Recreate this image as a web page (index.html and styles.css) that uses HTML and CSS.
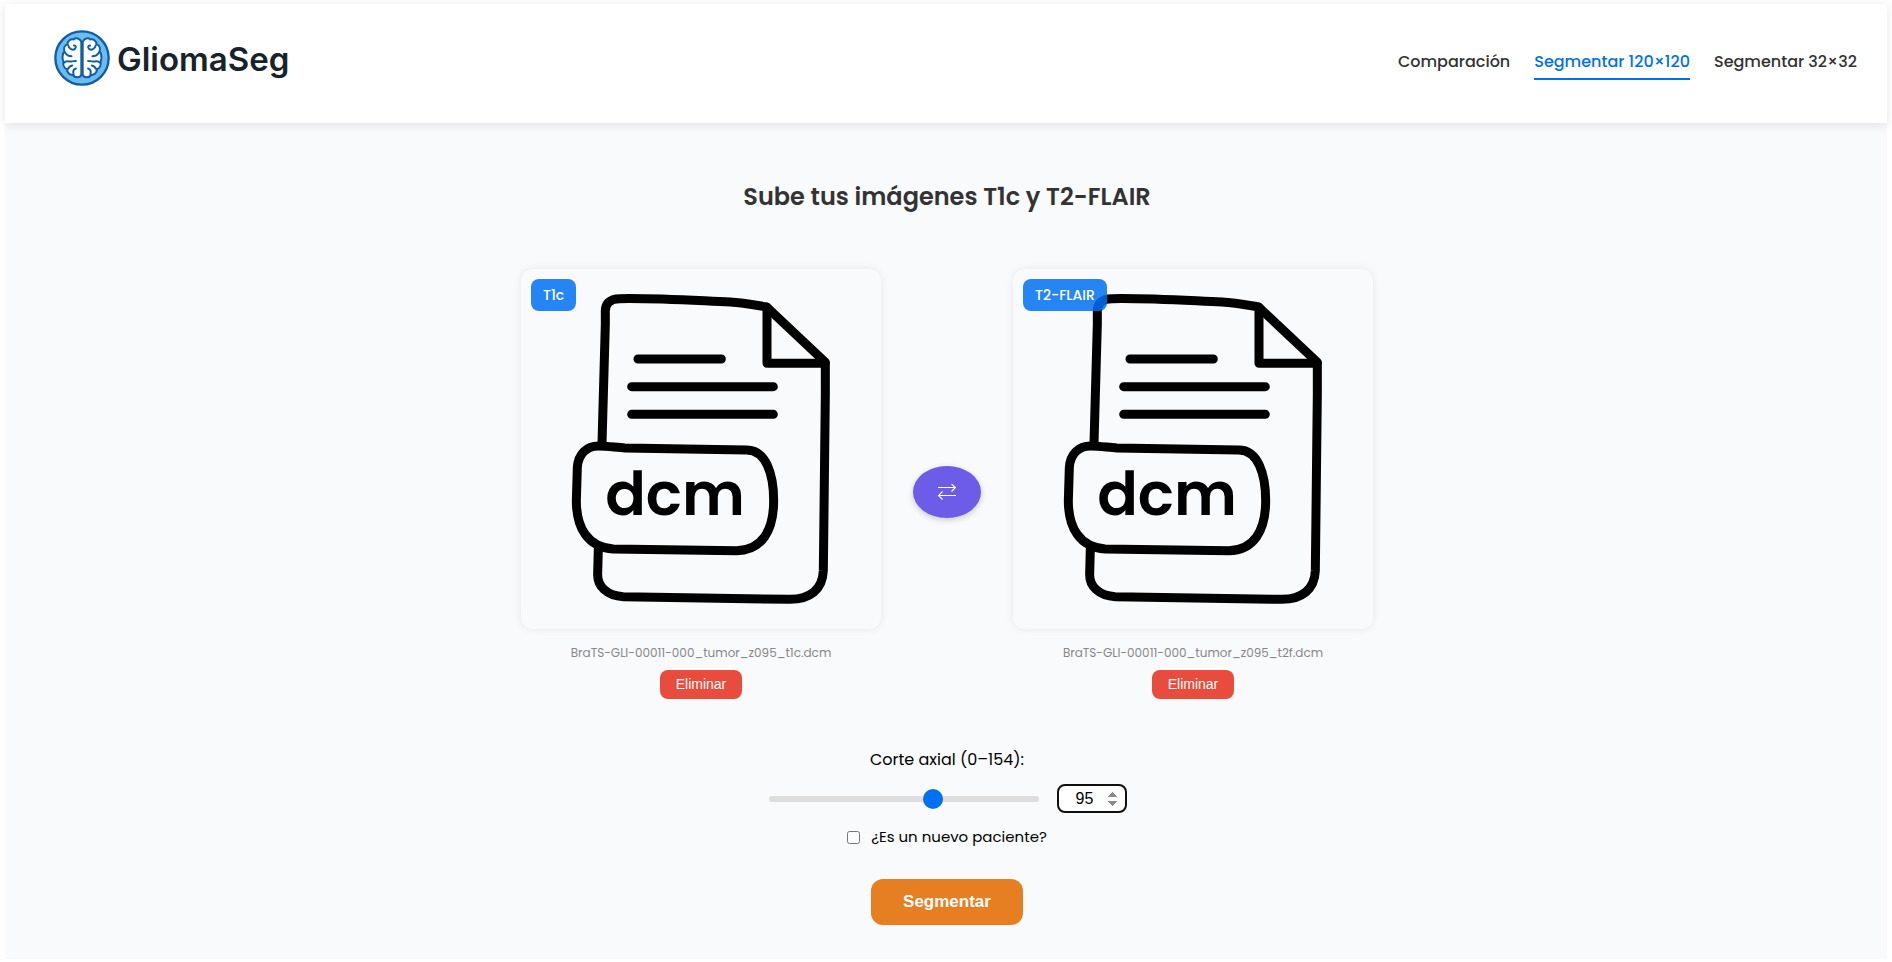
FILE: index.html
```html
<!DOCTYPE html>
<html lang="es">
<head>
<meta charset="utf-8">
<title>GliomaSeg</title>
<link rel="stylesheet" href="styles.css">
</head>
<body>
<div class="page">
  <header class="header">
    <a class="logo" href="#">
      <svg class="logo-mark" viewBox="0 0 166 166" aria-hidden="true">
        <circle cx="83" cy="83" r="79" fill="#6bbcf2" stroke="#125ea3" stroke-width="7"/>
        <g transform="translate(-164 -91)" fill="#fff" stroke="#125ea3" stroke-width="6" stroke-linecap="round" stroke-linejoin="round">
          <path d="M245 126C241 115 228 113 222 119C212 117 204 124 204 133C195 137 192 146 195 154C188 162 188 176 192 184C190 194 194 204 202 207C203 218 211 225 220 224C226 234 242 234 245 223Z"/>
          <path d="M249 126C253 115 266 113 272 119C282 117 290 124 290 133C299 137 302 146 299 154C306 162 306 176 302 184C304 194 300 204 292 207C291 218 283 225 274 224C268 234 252 234 249 223Z"/>
          <path fill="none" d="M206 136C208 148 220 152 226 147C231 142 228 136 223 137M196 157C201 165 208 169 216 169M193 188C203 179 209 187 217 184C222 183 225 183 229 183M204 208C208 201 211 197 218 196M222 222C219 211 223 207 229 205"/>
          <path fill="none" d="M288 136C286 148 274 152 268 147C263 142 266 136 271 137M298 157C293 165 286 169 278 169M301 188C291 179 285 187 277 184C272 183 269 183 265 183M290 208C286 201 283 197 276 196M272 222C275 211 271 207 265 205"/>
        </g>
      </svg>
      <span class="logo-name">GliomaSeg</span>
    </a>
    <nav class="nav">
      <a href="#">Comparación</a>
      <a href="#" class="active" aria-current="page">Segmentar 120×120</a>
      <a href="#">Segmentar 32×32</a>
    </nav>
  </header>
  <main class="main">
    <h1 class="title">Sube tus imágenes T1c y T2-FLAIR</h1>
    <div class="uploads">
      <section class="upload">
        <div class="preview">
          <svg class="file-icon" viewBox="11 15 360 360">
            <g transform="scale(.33333)">
              <path stroke-linecap="butt" d="M276 570L286 210L286 178C284 150 298 134 330 134C440 132 560 140 660 144C700 146 740 154 770 159L946 325L946 420L940 950C938 1006 900 1036 840 1036L340 1028C290 1026 262 996 263 960L265 882"/>
              <path d="M771 160V328H946"/>
              <path d="M265 576C295 576 320 581 345 582L710 588C768 588 791 660 791 740C791 830 755 890 680 890L310 885C232 880 199 820 199 740L202 640C205 600 230 576 265 576Z"/>
              <path d="M384 315H634M365 398H790M365 481H790"/>
            </g>
            <text class="dcm-text" x="165" y="261" text-anchor="middle">dcm</text>
          </svg>
          <span class="badge">T1c</span>
        </div>
        <p class="filename">BraTS-GLI-00011-000_tumor_z095_t1c.dcm</p>
        <button class="remove" type="button">Eliminar</button>
      </section>
      <button class="swap" type="button" aria-label="Intercambiar">
        <svg viewBox="0 0 18 16" width="18" height="16" fill="none" stroke="#fff" stroke-width="1.2"><path d="M0 3.500H17.500M13.500 0L17.500 3.500L13.500 7.500M18 11.500H.5M4.500 7.500L.5 11.500L4.500 15.500"/></svg>
      </button>
      <section class="upload">
        <div class="preview">
          <svg class="file-icon" viewBox="11 15 360 360">
            <g transform="scale(.33333)">
              <path stroke-linecap="butt" d="M276 570L286 210L286 178C284 150 298 134 330 134C440 132 560 140 660 144C700 146 740 154 770 159L946 325L946 420L940 950C938 1006 900 1036 840 1036L340 1028C290 1026 262 996 263 960L265 882"/>
              <path d="M771 160V328H946"/>
              <path d="M265 576C295 576 320 581 345 582L710 588C768 588 791 660 791 740C791 830 755 890 680 890L310 885C232 880 199 820 199 740L202 640C205 600 230 576 265 576Z"/>
              <path d="M384 315H634M365 398H790M365 481H790"/>
            </g>
            <text class="dcm-text" x="165" y="261" text-anchor="middle">dcm</text>
          </svg>
          <span class="badge">T2-FLAIR</span>
        </div>
        <p class="filename">BraTS-GLI-00011-000_tumor_z095_t2f.dcm</p>
        <button class="remove" type="button">Eliminar</button>
      </section>
    </div>
    <form class="controls">
      <label class="slice-label" for="slice">Corte axial (0–154):</label>
      <div class="slice-row">
        <input class="slider" id="slice" type="range" min="0" max="154" value="95">
        <input class="slice-number" type="number" min="0" max="154" value="95" aria-label="Corte axial" autofocus>
      </div>
      <label class="new-patient"><input type="checkbox"> ¿Es un nuevo paciente?</label>
      <button class="submit" type="button">Segmentar</button>
    </form>
  </main>
</div>
</body>
</html>
```
FILE: styles.css
```css
* { box-sizing: border-box; }
body {
  margin: 0;
  padding: 4px 5px 3px;
  min-height: 100vh;
  display: flex;
  background: #fff;
  color: #000;
  font: 16px/24px Poppins, Inter, sans-serif;
}
.page { flex: 1; background: #f9fafc; }
.header {
  display: flex;
  justify-content: space-between;
  align-items: center;
  height: 119px;
  padding: 0 30px 0 49px;
  background: #fff;
  box-shadow: 0 2px 10px rgba(0, 0, 0, .1);
}
.logo {
  display: flex;
  align-items: center;
  gap: 7px;
  padding-bottom: 11px;
  color: #17232b;
  text-decoration: none;
}
.logo-mark { width: 56px; height: 56px; }
.logo-name { font: 600 33px/40px Inter, sans-serif; padding-top: 2px; }
.nav { display: flex; gap: 24px; padding-bottom: 1px; }
.nav a {
  padding: 4px 0;
  border-bottom: 2px solid transparent;
  color: #333;
  font-size: 16px;
  font-weight: 500;
  text-decoration: none;
}
.nav a.active { color: #0070f3; border-color: #0070f3; }
.main {
  display: flex;
  flex-direction: column;
  align-items: center;
  padding: 56px 16px 24px 18px;
}
.title {
  margin: 0 0 54px;
  color: #333;
  font-size: 24px;
  line-height: 36px;
  font-weight: 600;
}
.uploads { display: flex; align-items: center; gap: 32px; }
.upload {
  display: flex;
  flex-direction: column;
  align-items: center;
  width: 360px;
  padding-bottom: 16px;
}
.preview {
  position: relative;
  width: 100%;
  aspect-ratio: 1;
  border-radius: 12px;
  background: #f9fafc;
  box-shadow: 0 0 8px rgba(0, 0, 0, .08);
}
.file-icon { display: block; width: 100%; height: 100%; }
.file-icon g {
  fill: none;
  stroke: #000;
  stroke-width: 27px;
  stroke-linecap: round;
  stroke-linejoin: round;
}
.dcm-text { font: 600 60px Poppins, Inter, sans-serif; }
.badge {
  position: absolute;
  top: 10px;
  left: 10px;
  padding: 6px 12px;
  border-radius: 8px;
  background: rgba(0, 112, 243, .85);
  color: #fff;
  font-size: 14px;
  line-height: 20px;
  font-weight: 500;
}
.filename {
  margin: 13px 0 6px;
  color: #888;
  font-size: 12px;
  line-height: 22px;
}
button { border: 0; color: #fff; cursor: pointer; }
.remove {
  padding: 6px 16px;
  border-radius: 8px;
  background: #e74c3c;
  font: 14px/17px "Liberation Sans", Arial, sans-serif;
}
.swap {
  display: flex;
  align-items: center;
  justify-content: center;
  width: 68px;
  height: 52px;
  border-radius: 50%;
  background: #6c5ce7;
  box-shadow: 0 2px 6px rgba(0, 0, 0, .2);
}
.controls {
  display: flex;
  flex-direction: column;
  align-items: center;
  margin-top: 33px;
}
.slice-row {
  display: flex;
  align-items: center;
  gap: 18px;
  margin: 12px 0;
  padding-left: 2px;
}
.slider {
  appearance: none;
  width: 270px;
  height: 6px;
  margin: 0;
  border-radius: 3px;
  background: #ddd;
}
.slider::-webkit-slider-thumb {
  appearance: none;
  width: 20px;
  height: 20px;
  border-radius: 50%;
  background: #0070f3;
}
.slice-number {
  width: 70px;
  height: 29px;
  padding: 2px 5px;
  border: 2px solid #101010;
  border-radius: 8px;
  outline: none;
  background: #fff;
  text-align: center;
  font: 16px/20px "Liberation Sans", Arial, sans-serif;
}
.slice-number::-webkit-inner-spin-button { opacity: 1; }
.new-patient { display: flex; align-items: center; gap: 11px; font-size: 15px; }
.new-patient input { width: 13px; height: 13px; margin: 0; }
.submit {
  margin-top: 30px;
  padding: 13px 32px;
  border-radius: 12px;
  background: #e67e22;
  font: 700 17px/20px "Liberation Sans", Arial, sans-serif;
}
```
